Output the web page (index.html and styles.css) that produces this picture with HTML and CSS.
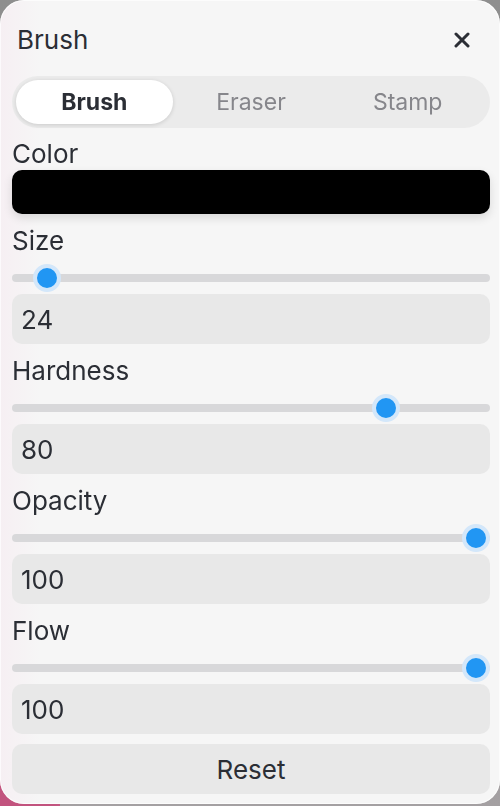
FILE: index.html
```html
<!DOCTYPE html>
<html>
<head>
    <title>Brush</title>
    <link rel="stylesheet" href="styles.css">
</head>
<body>
    <div class="panel">
        <div class="header">
            <span class="title">Brush</span>
            <button class="close" aria-label="Close">
                <svg width="16" height="16" viewBox="0 0 16 16"><path d="M2 2L14 14M14 2L2 14" stroke="#2b2e35" stroke-width="3" stroke-linecap="round"/></svg>
            </button>
        </div>

        <!-- tool switcher -->
        <div class="tabs">
            <button class="tab active">Brush</button>
            <button class="tab">Eraser</button>
            <button class="tab">Stamp</button>
        </div>

        <div class="field first">
            <label>Color</label>
            <div class="swatch"></div>
        </div>

        <div class="field">
            <label>Size</label>
            <input type="range" class="slider" min="1" max="500" value="24">
            <input type="text" class="num" value="24">
        </div>

        <div class="field">
            <label>Hardness</label>
            <input type="range" class="slider" min="0" max="100" value="80">
            <input type="text" class="num" value="80">
        </div>

        <div class="field">
            <label>Opacity</label>
            <input type="range" class="slider" min="0" max="100" value="100">
            <input type="text" class="num" value="100">
        </div>

        <div class="field">
            <label>Flow</label>
            <input type="range" class="slider" min="0" max="100" value="100">
            <input type="text" class="num" value="100">
        </div>

        <button class="reset">Reset</button>
    </div>
</body>
</html>
```

FILE: styles.css
```css
html, body { margin: 0; height: 100%; }
body { font-family: Inter, "Noto Sans", sans-serif; color: #2b2e35; background: linear-gradient(180deg, #8e8e8e 0%, #9a9a9a 60%, #a4a0a2 100%); overflow: hidden; }
body::before { content: ""; position: fixed; left: 0; bottom: 0; width: 60px; height: 120px; background: radial-gradient(circle at 0 100%, #c2537e 0, #c2537e 40%, rgba(194,83,126,0) 100%); }

.panel { position: relative; box-sizing: border-box; width: 500px; padding: 12px 10px 10px 12px; border-radius: 24px; background: linear-gradient(90deg, #f6eff3 0, #f6f6f6 40px); box-shadow: inset 0 0 0 1px rgba(255,255,255,.7); }

.header { height: 55px; display: flex; align-items: center; justify-content: space-between; padding: 0 20px 0 5px; }
.title { font-size: 26px; line-height: 28px; }
.close { background: none; border: none; padding: 0; width: 16px; height: 16px; cursor: pointer; }
.close svg { display: block; }

.tabs { margin-top: 9px; height: 52px; box-sizing: border-box; padding: 4px; border-radius: 26px; background: #ebebeb; display: grid; grid-template-columns: 1fr 1fr 1fr; }
.tab { border: none; background: none; font-family: inherit; font-size: 23px; color: #86868b; border-radius: 22px; cursor: pointer; padding: 0; }
.tab.active { background: #fff; color: #2b2e35; font-weight: 700; box-shadow: 0 1px 4px rgba(0,0,0,.14); }

.field { margin-top: 13px; display: flex; flex-direction: column; }
.field.first { margin-top: 12px; }
.field label { font-size: 26px; line-height: 28px; }

.swatch { margin-top: 2px; height: 44px; border-radius: 10px; background: #000; box-shadow: 0 4px 10px rgba(0,0,0,.12); }

.slider { -webkit-appearance: none; appearance: none; margin: 9px 0 0; width: 100%; height: 28px; background: transparent; }
.slider::-webkit-slider-runnable-track { height: 8px; border-radius: 4px; background: #d8d8da; }
.slider::-webkit-slider-thumb { -webkit-appearance: none; box-sizing: border-box; width: 28px; height: 28px; margin-top: -10px; border-radius: 50%; background: #2196f3; border: 4px solid #d3e7fa; }

.num { margin-top: 2px; box-sizing: border-box; height: 50px; border: none; border-radius: 10px; background: #e8e8e8; padding: 0 9px; font-family: inherit; font-size: 26px; color: #2b2e35; outline: none; }

.reset { margin-top: 10px; width: 100%; height: 50px; border: none; border-radius: 10px; background: #e8e8e8; font-family: inherit; font-size: 26px; color: #2b2e35; cursor: pointer; }
```
